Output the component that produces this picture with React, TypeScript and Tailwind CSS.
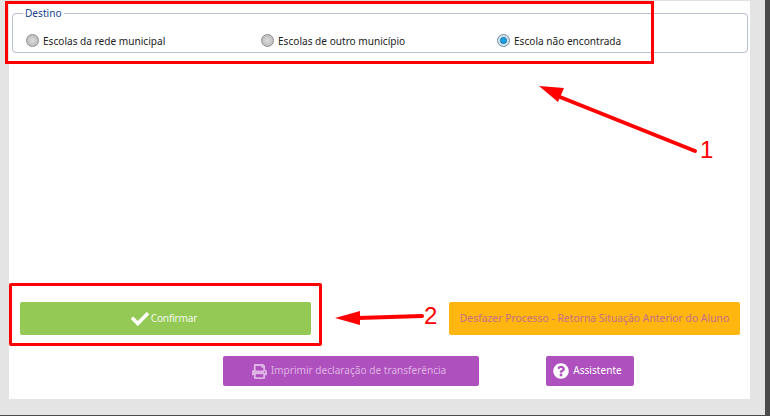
import { FaCheck, FaPrint, FaQuestionCircle } from "react-icons/fa";

const font = "font-['Noto_Sans','Liberation_Sans',sans-serif]";

function Radio({ label, checked }: { label: string; checked?: boolean }) {
  return (
    <div className="flex items-center gap-[4px]">
      {checked ? (
        <span className="flex h-[13px] w-[13px] items-center justify-center rounded-full border border-[#6f8da3] bg-[#d5e3ec]">
          <span className="h-[7px] w-[7px] rounded-full border border-[#0a6fa8] bg-[#1aa5e6]" />
        </span>
      ) : (
        <span className="h-[13px] w-[13px] rounded-full border border-[#8f8f8f] bg-[radial-gradient(circle,#dcdcdc,#b4b4b4)]" />
      )}
      <span className="text-[10.1px] leading-[12px] text-[#222222]">{label}</span>
    </div>
  );
}

export default function App() {
  return (
    <div className={`relative h-[416px] w-[770px] overflow-hidden border-r-[5px] border-b border-[#4a4a4a] bg-[#e4e4e4] ${font}`}>
      <div className="ml-[9px] flex h-[399px] w-[741px] flex-col border-t border-[#e0e0e0] bg-white px-[3px]">
        <fieldset className="mt-[6px] h-[46px] w-[736px] rounded-[4px] border border-[#b9bfd2] pl-[13px]">
          <legend className="-ml-[3px] px-[2px] text-[10.1px] leading-[12px] text-[#123f8c]">Destino</legend>
          <div className="mt-[15px] grid grid-cols-[235px_236px_auto]">
            <Radio label="Escolas da rede municipal" />
            <Radio label="Escolas de outro município" />
            <Radio label="Escola não encontrada" checked />
          </div>
        </fieldset>

        <div className="mt-[249px] flex justify-between pl-[8px] pr-[7px]">
          <button className="flex h-[33px] w-[291px] items-center justify-center gap-[2px] rounded-[2px] bg-[#94c956] pr-[3px] text-[10.1px] tracking-[-0.2px] text-[#f3f9ea]">
            <FaCheck className="h-[18px] w-[18px] text-white" />
            Confirmar
          </button>
          <button className="flex h-[33px] w-[291px] items-center justify-center rounded-[2px] bg-[#ffb60f] text-[10.35px] text-[#c4708a]">
            Desfazer Processo - Retorna Situação Anterior do Aluno
          </button>
        </div>

        <div className="mt-[21px] flex">
          <button className="ml-[211px] flex h-[30px] w-[256px] items-center justify-center gap-[4px] rounded-[2px] bg-[#ae50bd] pr-[4px] text-[10.1px] text-[#dfb3e5]">
            <FaPrint className="h-[15px] w-[15px]" />
            Imprimir declaração de transferência
          </button>
          <button className="ml-[67px] flex h-[30px] w-[88px] items-center justify-center gap-[4px] rounded-[2px] bg-[#ae50bd] pr-[5px] text-[10.1px] text-white">
            <FaQuestionCircle className="h-[16px] w-[16px]" />
            Assistente
          </button>
        </div>
      </div>

      {/* annotations */}
      <div className="absolute left-[5px] top-[1px] h-[63px] w-[649px] border-[3px] border-[#ff0000]" />
      <div className="absolute left-[9px] top-[283px] h-[63px] w-[313px] rounded-[2px] border-[3px] border-[#ff0000]" />
      <svg className="absolute left-0 top-0 h-[416px] w-[770px]" viewBox="0 0 770 416" fill="none">
        <path d="M695 151 L560 97" stroke="#ff0000" strokeWidth="4" strokeLinecap="round" />
        <path d="M539 86 L564 88 L558 102 Z" fill="#ff0000" />
        <path d="M422 316 L358 318" stroke="#ff0000" strokeWidth="4" strokeLinecap="round" />
        <path d="M335 318 L360 311 L360 325 Z" fill="#ff0000" />
      </svg>
      <span className="absolute left-[700px] top-[136px] font-['Liberation_Sans',sans-serif] text-[24px] leading-[28px] text-[#ff0000]">1</span>
      <span className="absolute left-[424px] top-[302px] font-['Liberation_Sans',sans-serif] text-[24px] leading-[28px] text-[#ff0000]">2</span>
    </div>
  );
}
